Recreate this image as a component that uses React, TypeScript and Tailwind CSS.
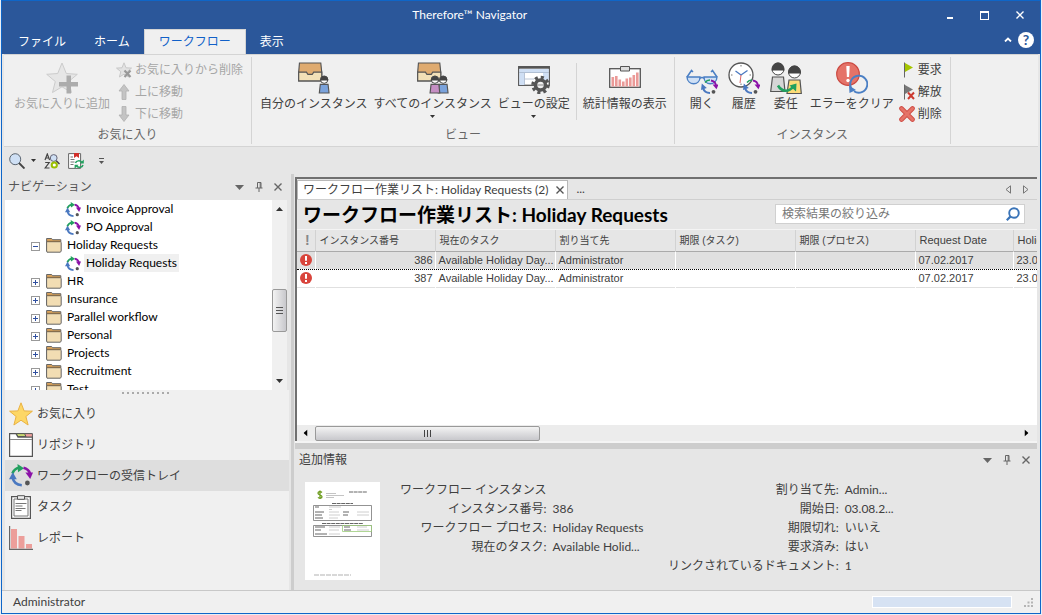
import React from "react";

type SvgProps = { className?: string };

const WorkflowIcon = ({ className = "size-4" }: SvgProps) => (
  <svg viewBox="0 0 24 24" className={className} fill="none" aria-hidden="true">
    <path d="M3.4 9.5C4.6 6.4 6.8 4.4 10 3.8" stroke="#22a05f" strokeWidth="2.6" />
    <path d="M8.500 0l6.500 4.200-6 4z" fill="#22a05f" />
    <path d="M14.5 3.8c3.6.8 5.7 3 6.600 6" stroke="#8b12a8" strokeWidth="2.600" />
    <path d="M16.400 8.400h7.600l-2.800 6.600z" fill="#8b12a8" />
    <path d="M3.600 13.500c.8 4.600 4.200 7.300 9.200 7.700" stroke="#4a78c0" strokeWidth="2.600" />
    <path d="M3.800 8.200l4 7H0z" fill="#4a78c0" />
    <circle cx="18.400" cy="19" r="2.400" fill="#555" />
  </svg>
);

const FolderIcon = () => (
  <svg viewBox="0 0 16 16" className="size-4 shrink-0" aria-hidden="true">
    <path d="M.6 14V1.500h5l1 1.200h8.200V5" fill="#dba45e" stroke="#666" />
    <path d="M.6 4.700h13.800l.8 1V14l-.8 1.200H1L.6 14z" fill="#f2ddb3" stroke="#666" />
    <path d="M1.200 4.300h13" stroke="#8a6a3c" strokeWidth=".8" />
  </svg>
);

const Star = ({ className, fill, stroke }: SvgProps & { fill: string; stroke: string }) => (
  <svg viewBox="0 0 24 24" className={className} aria-hidden="true">
    <path d="M12 .8l3.100 8.100 8.300.3-6.500 5.300 2.200 8.500-7.100-4.800L4.900 23l2.200-8.500L.6 9.200l8.300-.3z" fill={fill} stroke={stroke} />
  </svg>
);

const AddStarIcon = () => (
  <svg viewBox="0 0 32 32" className="size-8" aria-hidden="true">
    <path d="M16 1l4.300 10.500 11 .8-8.600 7.200 2.800 11L16 24.800 6.500 30.500l2.800-11L.7 12.300l11-.8z" fill="#e6e6e6" stroke="#cccccc" />
    <path d="M20.500 13.500h4.500v6.500h7v4.500h-7v7h-4.500v-7h-7.500V20h7.500z" fill="#acacac" />
  </svg>
);

const RemoveStarIcon = () => (
  <svg viewBox="0 0 16 16" className="size-4" aria-hidden="true">
    <path d="M8 .8l2 5 5.500.3-4.300 3.600 1.400 5.300L8 12.200 3.400 15l1.400-5.300L.5 6.100 6 5.800z" fill="#e2e2e2" stroke="#c8c8c8" />
    <path d="M8.500 8.500l6 6.500M14.500 8.500l-6 6.500" stroke="#999" strokeWidth="2.200" />
  </svg>
);

const ArrowIcon = ({ down }: { down?: boolean }) => (
  <svg viewBox="0 0 16 16" className="size-4" aria-hidden="true">
    <path
      d={down ? "M8 15.500l5-6.500h-3V.5H6V9H3z" : "M8 .5l5 6.500h-3v8.500H6V7H3z"}
      fill="#c4c4c4"
      stroke="#b0b0b0"
      strokeWidth=".8"
    />
  </svg>
);

const TrayBase = () => (
  <g>
    <path d="M1.500 1h22l1 9.500v9H.7v-9z" fill="#dfab70" stroke="#555" strokeWidth="1.200" />
    <path d="M.7 10.500h8l1.500 2.300h4.500l1.500-2.300h8.300v9H.7z" fill="#f2e0b8" stroke="#555" strokeWidth="1.200" />
  </g>
);

const Person = ({ x, fill }: { x: number; fill: string }) => (
  <g transform={`translate(${x} 14)`}>
    <path d="M1 9h8l1 9H0z" fill={fill} stroke="#555" strokeWidth="1.200" />
    <circle cx="5" cy="4.200" r="3.800" fill="#fff" stroke="#444" />
    <path d="M.8 5a4.200 4.600 0 018.400 0z" fill="#444" />
  </g>
);

const MyInstancesIcon = () => (
  <svg viewBox="0 0 33 33" className="size-8" aria-hidden="true">
    <TrayBase />
    <Person x={22} fill="#7ba3dc" />
  </svg>
);

const AllInstancesIcon = () => (
  <svg viewBox="0 0 33 33" className="size-8" aria-hidden="true">
    <TrayBase />
    <Person x={22} fill="#7ba3dc" />
    <Person x={13.500} fill="#c58fc4" />
  </svg>
);

const ViewSettingsIcon = () => (
  <svg viewBox="0 0 32 32" className="size-8" aria-hidden="true">
    <rect x=".7" y="4.700" width="30.600" height="18.600" fill="#fff" stroke="#555" strokeWidth="1.300" />
    <path d="M1.300 7h29.400v4H1.300zM1.300 11h5v12h-5zM25 11h5.700v8H25z" fill="#cfdff4" />
    <path d="M.5 5.500h31" stroke="#555" strokeWidth="2.400" />
    <path d="M6.500 11v12M1 10.500h30M7 17h9" stroke="#a9b8cc" strokeWidth=".8" />
    <circle cx="22.500" cy="23" r="7" stroke="#555" strokeWidth="4.500" strokeDasharray="2.800 2.700" fill="none" />
    <circle cx="22.500" cy="23" r="5" stroke="#555" strokeWidth="3.600" fill="#eee" />
    <path d="M19.500 23h6" stroke="#888" />
  </svg>
);

const StatsIcon = () => (
  <svg viewBox="0 0 32 32" className="size-8" aria-hidden="true">
    <rect x=".7" y="6.700" width="30.600" height="18.600" fill="#fff" stroke="#555" strokeWidth="1.300" />
    <path d="M11.500 4.500h9v4.500h-9z" fill="#ddd" stroke="#555" />
    <path d="M2.500 15h2.600v9.500H2.500zM6 14h2.600v10.500H6zM9.500 17.500h2.600v7H9.500zM13 19.500h2.600v5H13zM16.500 16.500h2.600v8h-2.600zM20 15.500h2.600v9H20zM23.500 13h2.600v11.500h-2.600zM27 10.500h2.600v14H27z" fill="#eb9a98" />
  </svg>
);

const MiniFlow = () => (
  <g fill="none">
    <path d="M19 20.500c1.500-2 3-2.500 5-2.500" stroke="#22a05f" strokeWidth="1.500" />
    <path d="M25 18.500c3 .5 4.500 2 5 5" stroke="#8b12a8" strokeWidth="1.800" />
    <path d="M26.500 22.500h6l-2 4.800z" fill="#8b12a8" />
    <path d="M17 26c1 3.500 3.500 5 7 5" stroke="#4a78c0" strokeWidth="2" />
    <path d="M15 28l.8-6.500 5 4.500z" fill="#4a78c0" />
    <circle cx="27.500" cy="29.800" r="1.900" fill="#555" />
  </g>
);

const OpenIcon = () => (
  <svg viewBox="0 0 32 32" className="size-8" fill="none" aria-hidden="true">
    <path d="M1 15L5.500 8.500 7 10M31 15l-4.500-6.500L25 10M14 16.500c1-1.200 3-1.200 4 0" stroke="#4a7fc4" strokeWidth="1.500" />
    <path d="M1 15h13c0 9-12.500 9-13 0zM18 15h13c-.5 9-13 9-13 0z" fill="#cfe0f5" stroke="#4a7fc4" strokeWidth="1.400" />
    <MiniFlow />
  </svg>
);

const HistoryIcon = () => (
  <svg viewBox="0 0 32 32" className="size-8" fill="none" aria-hidden="true">
    <circle cx="13" cy="13" r="12" fill="#fff" stroke="#555" strokeWidth="1.300" />
    <path d="M13 3v1.500M13 21.500V23M3 13h1.500M21.500 13H23" stroke="#777" />
    <path d="M7.500 9L13 13l6.500-4.500" stroke="#4a78c0" strokeWidth="1.300" />
    <path d="M13 13l-1 8" stroke="#d66" />
    <MiniFlow />
  </svg>
);

const DelegateIcon = () => (
  <svg viewBox="0 0 32 32" className="size-8" fill="none" aria-hidden="true">
    <path d="M2.500 15h11l1.500 14.500H.7z" fill="#d6d6d6" stroke="#555" strokeWidth="1.200" />
    <path d="M19 18h11l1.300 13.500H17z" fill="#fddc78" stroke="#555" strokeWidth="1.200" />
    <circle cx="8" cy="7" r="6" fill="#fff" stroke="#444" />
    <path d="M1.600 8.500a6.400 8 0 0112.800 0z" fill="#444" />
    <circle cx="24.500" cy="10" r="6" fill="#fff" stroke="#444" />
    <path d="M18.100 11.500a6.400 8 0 0112.800 0z" fill="#444" />
    <path d="M8 23.500c4 7 11 6.500 15.500 1" stroke="#22a05f" strokeWidth="2.600" />
    <path d="M19.500 23.500l7-2-.5 8z" fill="#22a05f" />
  </svg>
);

const ClearErrorIcon = () => (
  <svg viewBox="0 0 32 32" className="size-8" fill="none" aria-hidden="true">
    <circle cx="12" cy="12" r="11.300" fill="#e57368" stroke="#cb4a42" strokeWidth="1.200" />
    <path d="M10.300 4h3.400l-.6 11h-2.200z" fill="#fff" />
    <circle cx="12" cy="18.500" r="1.700" fill="#fff" />
    <path d="M15.200 26a8.500 8.500 0 112.800 3.200" stroke="#4a7fc4" strokeWidth="1.900" />
    <path d="M13 23.500l7 4.500-6.500 3z" fill="#4a7fc4" />
  </svg>
);

const FlagIcon = ({ released }: { released?: boolean }) => (
  <svg viewBox="0 0 16 16" className="size-4" aria-hidden="true">
    <path d="M5.500.5v15" stroke="#666" />
    <path d="M6 1l8 4.500L6 10z" fill={released ? "#777" : "#a5c500"} />
    {released && <path d="M9 8.500l6 6.500M15 8.500L9 15" stroke="#cc3a30" strokeWidth="2" />}
  </svg>
);

const DeleteIcon = () => (
  <svg viewBox="0 0 16 16" className="size-4" aria-hidden="true">
    <path d="M2.500 2.500l11 11M13.500 2.500l-11 11" stroke="#cf4a42" strokeWidth="4.600" strokeLinecap="round" />
    <path d="M2.500 2.500l11 11M13.500 2.500l-11 11" stroke="#e57368" strokeWidth="3" strokeLinecap="round" />
  </svg>
);

const MagnifierIcon = () => (
  <svg viewBox="0 0 16 16" className="size-4" aria-hidden="true">
    <path d="M10 10l5.500 5.500" stroke="#444" strokeWidth="1.900" />
    <circle cx="6.200" cy="6.200" r="5.500" fill="#cfe0f5" stroke="#5a6470" />
  </svg>
);

const AzSearchIcon = () => (
  <svg viewBox="0 0 16 16" className="size-4" fill="none" aria-hidden="true">
    <path d="M1 7L3.300 1 5.600 7M1.800 5h3M1.200 9.500h4L1.200 15h4.300" stroke="#444" strokeWidth="1.200" />
    <path d="M12 7.500l3.500 3.500" stroke="#444" strokeWidth="1.500" />
    <circle cx="9.700" cy="5" r="3.400" fill="#cfe0f5" stroke="#667" />
    <circle cx="10.300" cy="12" r="2.600" fill="#fff" stroke="#9abf00" strokeWidth="2" />
  </svg>
);

const ReportRefreshIcon = () => (
  <svg viewBox="0 0 16 16" className="size-4" fill="none" aria-hidden="true">
    <path d="M.6.600h12v14.800H.6z" fill="#fff" stroke="#666" />
    <path d="M2.500 4H5M2.500 6.500h4M2.500 9h4M2.500 11.500h3" stroke="#777" />
    <path d="M6 0h5v5L8.500 3.300 6 5z" fill="#d22f2a" />
    <path d="M7.500 10c.8-2.400 4.500-3 6.300-.8M15 12c-.8 2.600-4.600 3.200-6.400 1" stroke="#22a05f" strokeWidth="1.500" />
    <path d="M15.800 6.500v4h-4zM6.600 15.800v-4h4z" fill="#22a05f" />
  </svg>
);

const RepositoryIcon = () => (
  <svg viewBox="0 0 24 24" className="size-6" aria-hidden="true">
    <path d="M8 .6h15.400v4H9z" fill="#f0a09c" stroke="#555" />
    <path d="M7 .6h8.500l1.500 3H9z" fill="#c8d870" stroke="#555" />
    <path d="M.6.600h6.400l2 3.500h14.400v19.300H.6z" fill="#fff" stroke="#555" strokeWidth="1.200" />
    <path d="M1 6.500h22" stroke="#888" />
  </svg>
);

const TaskIcon = () => (
  <svg viewBox="0 0 24 24" className="size-6" aria-hidden="true">
    <path d="M2.600 1.600h18.800v21.800H2.600z" fill="#fff" stroke="#555" strokeWidth="1.200" />
    <path d="M5 4h14v17H5z" fill="#fff" stroke="#777" />
    <path d="M8.500.7h7v3.600h-7z" fill="#eee" stroke="#555" />
    <path d="M6.500 8.500h11M6.500 11h7M6.500 13.500h10M6.500 15.500h6" stroke="#777" />
  </svg>
);

const ReportIcon = () => (
  <svg viewBox="0 0 24 24" className="size-6" aria-hidden="true">
    <path d="M2 3h6v19.500H2zM9.500 10h6v12.500h-6zM17 18h6v4.500h-6z" fill="#ec9e9a" />
    <path d="M.6 0v23.400H24" fill="none" stroke="#666" strokeWidth="1.200" />
  </svg>
);

const ErrorBadge = () => (
  <svg viewBox="0 0 12 12" className="size-3" role="img" aria-label="エラー">
    <circle cx="6" cy="6" r="6" fill="#d9453c" />
    <path d="M5 2h2v4.800H5zM5 8h2v2H5z" fill="#fff" />
  </svg>
);

const Caret = ({ className = "w-[5px] h-[3px] text-[#333]" }: SvgProps) => (
  <svg viewBox="0 0 10 6" className={className} preserveAspectRatio="none" aria-hidden="true">
    <path d="M0 0h10L5 6z" fill="currentColor" />
  </svg>
);

const CloseGlyph = ({ className = "size-2" }: SvgProps) => (
  <svg viewBox="0 0 8 8" className={className} aria-hidden="true">
    <path d="M.5.500l7 7M7.500.500l-7 7" stroke="currentColor" strokeWidth="1.400" />
  </svg>
);

const PinGlyph = () => (
  <svg viewBox="0 0 8 10" className="h-2.5 w-2" fill="none" aria-hidden="true">
    <path d="M2.500 6V.5h3.500V6M5.200 1v5M.5 6h7M4 6v4" stroke="#666" />
  </svg>
);

const PanelControls = () => (
  <div className="flex items-center gap-[11px] text-[#666]">
    <button aria-label="メニュー" className="flex"><Caret className="h-[5px] w-[9px]" /></button>
    <button aria-label="固定" className="flex"><PinGlyph /></button>
    <button aria-label="閉じる" className="flex"><CloseGlyph /></button>
  </div>
);

function BigButton({ icon, label, menu, disabled, className = "px-[3px]" }: {
  icon: React.ReactNode; label: string; menu?: boolean; disabled?: boolean; className?: string;
}) {
  return (
    <button disabled={disabled} className={`flex flex-col items-center pt-[3px] whitespace-nowrap disabled:text-[#a6a6a6] ${className}`}>
      {icon}
      <span className="mt-0.5 leading-4">{label}</span>
      {menu && <span className="mt-[3px]"><Caret /></span>}
    </button>
  );
}

function SmallButton({ icon, label, disabled }: { icon: React.ReactNode; label: string; disabled?: boolean }) {
  return (
    <button disabled={disabled} className="flex h-[22px] items-center gap-[3px] whitespace-nowrap disabled:text-[#a6a6a6]">
      {icon}
      {label}
    </button>
  );
}

function RibbonGroup({ label, className, children }: { label: string; className: string; children: React.ReactNode }) {
  return (
    <section className="flex py-0.5">
      <div className="flex flex-col">
        <div className={`flex h-[70px] items-start pt-0.5 ${className}`}>{children}</div>
        <div className="h-[17px] text-center leading-4 text-[#666]">{label}</div>
      </div>
      <div className="w-px bg-[#d4d4d4]" />
    </section>
  );
}

const ribbonTabs = ["ファイル", "ホーム", "ワークフロー", "表示"];

function TitleBar() {
  return (
    <header className="bg-[#2b579a] text-white">
      <div className="grid h-7 grid-cols-[4fr_auto_5fr] items-center">
        <span />
        <h1>Therefore™ Navigator</h1>
        <div className="flex items-center justify-end gap-[27px] pr-[16px]">
          <button aria-label="最小化" className="flex h-2.5 items-end"><span className="mb-px h-0.5 w-1.5 bg-white" /></button>
          <button aria-label="最大化" className="flex"><span className="size-[9px] border border-t-2 border-white" /></button>
          <button aria-label="閉じる" className="flex"><CloseGlyph /></button>
        </div>
      </div>
      <div className="flex h-[25px] items-stretch pl-0.5">
        {ribbonTabs.map((t, i) => (
          <button key={t} className={i === 2 ? "border border-b-0 border-[#d4d4d4] bg-[#f0f0f0] px-3.5 text-[#1160c8]" : "px-3.5"}>
            {t}
          </button>
        ))}
        <div className="ml-auto flex items-center gap-1.5 pr-1.5 pb-1">
          <svg viewBox="0 0 8 5" className="h-[5px] w-2" fill="none" aria-hidden="true">
            <path d="M1 4.500l3-3 3 3" stroke="#fff" strokeWidth="1.800" />
          </svg>
          <button aria-label="ヘルプ" className="flex size-4 items-center justify-center rounded-full bg-white text-sm leading-4 font-bold text-[#2b579a]">?</button>
        </div>
      </div>
    </header>
  );
}

function Ribbon() {
  return (
    <div className="mx-0.5 flex border-y border-[#d4d4d4] bg-[#f0f0f0]">
      <RibbonGroup label="お気に入り" className="pl-[7px] pr-2">
        <BigButton disabled icon={<AddStarIcon />} label="お気に入りに追加" />
        <div className="flex flex-col pl-[3px]">
          <SmallButton disabled icon={<RemoveStarIcon />} label="お気に入りから削除" />
          <SmallButton disabled icon={<ArrowIcon />} label="上に移動" />
          <SmallButton disabled icon={<ArrowIcon down />} label="下に移動" />
        </div>
      </RibbonGroup>
      <RibbonGroup label="ビュー" className="pl-[5px] pr-1">
        <BigButton icon={<MyInstancesIcon />} label="自分のインスタンス" />
        <BigButton menu icon={<AllInstancesIcon />} label="すべてのインスタンス" />
        <BigButton menu icon={<ViewSettingsIcon />} label="ビューの設定" />
        <div className="mx-[3px] mt-1 h-[57px] w-px bg-[#d4d4d4]" />
        <BigButton icon={<StatsIcon />} label="統計情報の表示" />
      </RibbonGroup>
      <RibbonGroup label="インスタンス" className="pl-1.5 pr-2">
        <BigButton icon={<OpenIcon />} label="開く" className="px-[5px]" />
        <BigButton icon={<HistoryIcon />} label="履歴" className="px-[5px]" />
        <BigButton icon={<DelegateIcon />} label="委任" className="px-[5px]" />
        <BigButton icon={<ClearErrorIcon />} label="エラーをクリア" />
        <div className="flex flex-col pl-0.5">
          <SmallButton icon={<FlagIcon />} label="要求" />
          <SmallButton icon={<FlagIcon released />} label="解放" />
          <SmallButton icon={<DeleteIcon />} label="削除" />
        </div>
      </RibbonGroup>
    </div>
  );
}

function QuickBar() {
  return (
    <div className="flex h-[27px] items-center pl-[7px]">
      <button aria-label="検索" className="flex items-center gap-1.5"><MagnifierIcon /><Caret /></button>
      <button aria-label="高度な検索" className="ml-2 flex"><AzSearchIcon /></button>
      <button aria-label="レポート更新" className="ml-2 flex"><ReportRefreshIcon /></button>
      <button aria-label="カスタマイズ" className="ml-[15px] flex flex-col items-center gap-0.5 text-[#555]">
        <span className="h-px w-[5px] bg-[#555]" />
        <Caret className="h-[3px] w-[5px]" />
      </button>
    </div>
  );
}

type Node = { label: string; kind: "flow" | "folder"; open?: boolean; selected?: boolean };
const tree: Node[] = [
  { label: "Invoice Approval", kind: "flow" },
  { label: "PO Approval", kind: "flow" },
  { label: "Holiday Requests", kind: "folder", open: true },
  { label: "Holiday Requests", kind: "flow", selected: true },
  { label: "HR", kind: "folder" },
  { label: "Insurance", kind: "folder" },
  { label: "Parallel workflow", kind: "folder" },
  { label: "Personal", kind: "folder" },
  { label: "Projects", kind: "folder" },
  { label: "Recruitment", kind: "folder" },
  { label: "Test", kind: "folder" },
];

const navItems = [
  { label: "お気に入り", icon: <Star className="size-6" fill="#fdd766" stroke="#eab242" /> },
  { label: "リポジトリ", icon: <RepositoryIcon /> },
  { label: "ワークフローの受信トレイ", icon: <WorkflowIcon className="size-6" />, selected: true },
  { label: "タスク", icon: <TaskIcon /> },
  { label: "レポート", icon: <ReportIcon /> },
];

function Sidebar() {
  return (
    <aside className="flex w-[289px] shrink-0 flex-col pl-[3px]">
      <div className="flex h-[26px] items-center justify-between pl-[3px] pr-[9px] text-[#555]">
        <h2>ナビゲーション</h2>
        <PanelControls />
      </div>
      <div className="mr-1 flex h-[190px] bg-white">
        <ul className="min-w-0 flex-1 overflow-hidden text-black">
          {tree.map((n, i) => (
            <li key={i} className={`flex h-[18px] items-center ${n.kind === "flow" ? "pl-[60px]" : "pl-[26px]"}`}>
              {n.kind === "folder" && (
                <button
                  aria-label={n.open ? "折りたたむ" : "展開"}
                  className="mt-0.5 mr-1.5 flex size-[9px] items-center justify-center border border-[#999] bg-white"
                >
                  <svg viewBox="0 0 5 5" className="size-[5px]" aria-hidden="true">
                    <path d={n.open ? "M0 2.500h5" : "M0 2.500h5M2.500 0v5"} stroke="#3050a0" />
                  </svg>
                </button>
              )}
              {n.kind === "folder" ? <FolderIcon /> : <WorkflowIcon className="mt-0.5 size-4 shrink-0" />}
              <span className={`ml-[3px] h-[18px] px-0.5 leading-[18px] ${n.selected ? "bg-[#f0f0f0]" : ""}`}>{n.label}</span>
            </li>
          ))}
        </ul>
        <div className="flex w-[15px] flex-col items-center bg-[#f0f0f0] py-[7px]">
          <Caret className="h-1 w-[7px] rotate-180 text-[#333]" />
          <div className="mt-[78px] flex h-[43px] w-[15px] flex-col items-center justify-center gap-px rounded-xs border border-[#999] bg-linear-to-r from-[#f3f3f3] to-[#c8c8cc]">
            <span className="h-px w-[7px] bg-[#555]" />
            <span className="mt-px h-px w-[7px] bg-[#555]" />
            <span className="mt-px h-px w-[7px] bg-[#555]" />
          </div>
          <Caret className="mt-auto h-1 w-[7px] text-[#333]" />
        </div>
      </div>
      <div className="mr-0.5 flex flex-1 flex-col bg-[#f0f0f0]">
        <div className="flex h-2 justify-center gap-[3px] pt-0.5 pr-1">
          {Array.from({ length: 10 }, (_, i) => <span key={i} className="size-0.5 bg-[#aaa]" />)}
        </div>
        <nav className="flex flex-col">
          {navItems.map((n) => (
            <a key={n.label} href="#" className={`flex h-[31px] items-center gap-1 pl-1 ${n.selected ? "bg-[#dedede]" : ""}`}>
              {n.icon}
              {n.label}
            </a>
          ))}
        </nav>
      </div>
    </aside>
  );
}

const columns = [
  { label: "インスタンス番号", className: "text-[10px]" },
  { label: "現在のタスク", className: "text-[10px]" },
  { label: "割り当て先", className: "text-[10px]" },
  { label: "期限 (タスク)", className: "text-[10px]" },
  { label: "期限 (プロセス)", className: "text-[10px]" },
  { label: "Request Date", className: "text-[11px]" },
  { label: "Holiday Start", className: "text-[11px]" },
];

const rows = [
  ["386", "Available Holiday Day...", "Administrator", "", "", "07.02.2017", "23.02.2017"],
  ["387", "Available Holiday Day...", "Administrator", "", "", "07.02.2017", "23.02.2017"],
];

function WorkList() {
  return (
    <div className="flex min-h-0 flex-1 flex-col border-t-2 border-l-2 border-[#707070] bg-white">
      <div className="flex h-[21px] items-end border-b border-[#cfcfcf] bg-[#e6e6e6]">
        <div className="flex h-[19px] items-center border border-b-0 border-[#b8b8b8] bg-white pr-[3px] pl-[5px] whitespace-nowrap">
          ワークフロー作業リスト: Holiday Requests (2)
          <button aria-label="タブを閉じる" className="ml-2 flex text-[#555]"><CloseGlyph /></button>
        </div>
        <span className="ml-2 leading-5">...</span>
        <div className="ml-auto flex gap-3 self-center pr-2">
          <svg viewBox="0 0 6 9" className="h-[9px] w-1.5" fill="none" aria-hidden="true"><path d="M5.500.8v7.400L1 4.500z" stroke="#777" /></svg>
          <svg viewBox="0 0 6 9" className="h-[9px] w-1.5" fill="none" aria-hidden="true"><path d="M.5.800v7.400L5 4.500z" stroke="#777" /></svg>
        </div>
      </div>
      <div className="flex h-[30px] items-center justify-between border-b border-[#f4f4f4] bg-[#e6e6e6] pr-3 pl-1.5">
        <h2 className="text-[19px] font-bold whitespace-nowrap text-black">ワークフロー作業リスト: Holiday Requests</h2>
        <label className="mb-0.5 flex h-5 w-[250px] items-center border border-[#d0d0d0] bg-white pr-1 pl-1.5">
          <input aria-label="検索結果の絞り込み" placeholder="検索結果の絞り込み" className="min-w-0 flex-1 bg-transparent outline-none placeholder:text-[#777]" />
          <svg viewBox="0 0 14 14" className="size-3.5" fill="none" aria-hidden="true">
            <circle cx="8" cy="6" r="4.800" stroke="#3a74b8" strokeWidth="1.900" />
            <path d="M4.600 9.400L.8 13.200" stroke="#3a74b8" strokeWidth="2.200" />
          </svg>
        </label>
      </div>
      <div className="min-h-0 flex-1 overflow-hidden font-['Liberation_Sans','Noto_Sans_CJK_JP',sans-serif] text-[11px]">
        <table className="w-[836px] table-fixed border-collapse text-left whitespace-nowrap">
          <colgroup>
            <col className="w-[18px]" />
            <col className="w-[120px]" />
            <col className="w-[120px]" />
            <col className="w-[120px]" />
            <col className="w-[120px]" />
            <col className="w-[120px]" />
            <col className="w-[98px]" />
            <col className="w-[120px]" />
          </colgroup>
          <thead className="bg-[#e6e6e6]">
            <tr className="h-[21px] border-b border-[#aaa]">
              <th className="pl-[3px] text-center text-sm leading-4 font-bold text-[#888]">!</th>
              {columns.map((c) => (
                <th key={c.label} className={`border-l border-[#d2d2d2] pl-1 font-normal ${c.className}`}>{c.label}</th>
              ))}
            </tr>
          </thead>
          <tbody>
            {rows.map((r, i) => (
              <tr key={r[0]} className={i === 0 ? "h-[18px] border-y border-dotted border-black bg-[#e0e0e0]" : "h-[18px] border-b border-[#e0e0e0]"}>
                <td className="pl-[3px]"><ErrorBadge /></td>
                {r.map((v, j) => (
                  <td key={j} className={`overflow-hidden border-l border-l-white ${j === 0 ? "pr-0.5 text-right" : "pl-[3px]"}`}>{v}</td>
                ))}
              </tr>
            ))}
          </tbody>
        </table>
      </div>
      <div className="flex h-4 items-center bg-[#ececec] pr-[7px] pl-[5px]">
        <Caret className="h-1 w-[7px] rotate-90 text-black" />
        <div className="ml-1.5 flex h-[15px] w-[225px] items-center justify-center gap-0.5 rounded-xs border border-[#999] bg-linear-to-b from-[#f3f3f3] to-[#c8c8cc]">
          <span className="h-[7px] w-px bg-[#444]" />
          <span className="h-[7px] w-px bg-[#444]" />
          <span className="h-[7px] w-px bg-[#444]" />
        </div>
        <Caret className="ml-auto h-1 w-[7px] -rotate-90 text-black" />
      </div>
    </div>
  );
}

const details = [
  ["インスタンス番号:", "386"],
  ["ワークフロー プロセス:", "Holiday Requests"],
  ["現在のタスク:", "Available Holid..."],
];

const status = [
  ["割り当て先:", "Admin..."],
  ["開始日:", "03.08.2..."],
  ["期限切れ:", "いいえ"],
  ["要求済み:", "はい"],
  ["リンクされているドキュメント:", "1"],
];

const DocumentThumb = () => (
  <svg viewBox="0 0 75 98" className="mt-0.5 h-[98px] w-[75px] shrink-0 bg-white" role="img" aria-label="ドキュメントのプレビュー">
    <path d="M17 10.500c-1.500-1.500-4-.8-4 .8 0 2.200 4 1.200 4 3.400 0 1.600-2.800 2-4 .6M15 8.500v8.500" fill="none" stroke="#6a9a1a" strokeWidth="1.300" />
    <path d="M21 11.500h10M21 13.500h18M21 15.500h8" stroke="#b5b5b5" strokeWidth=".8" />
    <path d="M44 10h18M27 21.500h21M17 41.500h41" stroke="#666" strokeWidth="1" strokeDasharray="4 .6" />
    <path d="M8.500 23.500h58v15h-58zM8.500 43.500h58v11h-58z" fill="none" stroke="#777" strokeWidth=".8" />
    <path d="M10 25h4M10 30h9M10 33h7M10 36h8M38 30h6M38 33h5M10 45h10M10 48h6M10 52h12M39 45h6M39 48h7" stroke="#666" strokeWidth="1" />
    <path d="M24 25h12M24 27.500h3M24 30h10M24 33h11M24 36h9M52 30h12M52 33h12M24 45h11M24 48h10M24 52h11M52 45h10M52 48h12" stroke="#c8c8c8" strokeWidth=".9" />
    <path d="M37.500 43.500h29v6h-29z" fill="none" stroke="#9ccb7a" strokeWidth=".8" />
    <path d="M9 93h37" stroke="#a8a8a8" strokeWidth=".9" strokeDasharray="5 1" />
  </svg>
);

function InfoPanel() {
  return (
    <section className="h-[141px]">
      <div className="flex h-[22px] items-center justify-between pr-[7px] pl-1">
        <h2>追加情報</h2>
        <PanelControls />
      </div>
      <div className="flex pt-[9px] pl-2.5 whitespace-nowrap">
        <DocumentThumb />
        <dl className="ml-5 grid w-[268px] grid-cols-[auto_1fr] content-start gap-x-1.5 leading-[19px]">
          <dt>ワークフロー インスタンス</dt>
          <dd />
          {details.map(([k, v]) => (
            <React.Fragment key={k}>
              <dt className="text-right">{k}</dt>
              <dd>{v}</dd>
            </React.Fragment>
          ))}
        </dl>
        <dl className="grid grid-cols-[auto_1fr] content-start gap-x-1.5 leading-[19px]">
          {status.map(([k, v]) => (
            <React.Fragment key={k}>
              <dt className="text-right">{k}</dt>
              <dd>{v}</dd>
            </React.Fragment>
          ))}
        </dl>
      </div>
    </section>
  );
}

export default function App() {
  return (
    <div className="flex h-screen flex-col bg-[#e9eef5] px-px pb-px font-['Lato','Noto_Sans_CJK_JP',sans-serif] text-xs text-[#404040]">
      <div className="flex min-h-0 flex-1 flex-col border border-[#0f66c8] bg-[#e6e6e6]">
        <TitleBar />
        <Ribbon />
        <QuickBar />
        <div className="flex min-h-0 flex-1">
          <Sidebar />
          <div className="w-[3px] bg-[#cdcdcd]" />
          <main className="flex min-w-0 flex-1 flex-col pt-[3px] pr-[3px] pl-px">
            <WorkList />
            <div className="h-2 shrink-0 border-t-2 border-[#f4f4f4] bg-[#cdcdcd]" />
            <InfoPanel />
          </main>
        </div>
        <footer className="flex h-[23px] items-center justify-between border-t border-[#c8c8c8] bg-[#f0f0f0] pr-[7px] pl-[11px]">
          <span>Administrator</span>
          <div className="flex items-center gap-3">
            <div className="h-3 w-[140px] border border-white bg-[#d6e2f3]" />
            <svg viewBox="0 0 9 9" className="size-[9px]" aria-hidden="true">
              <path d="M7 0h2v2H7zM7 3.500h2v2H7zM7 7h2v2H7zM3.500 3.500h2v2h-2zM3.500 7h2v2h-2zM0 7h2v2H0z" fill="#b4b4b4" />
            </svg>
          </div>
        </footer>
      </div>
    </div>
  );
}
